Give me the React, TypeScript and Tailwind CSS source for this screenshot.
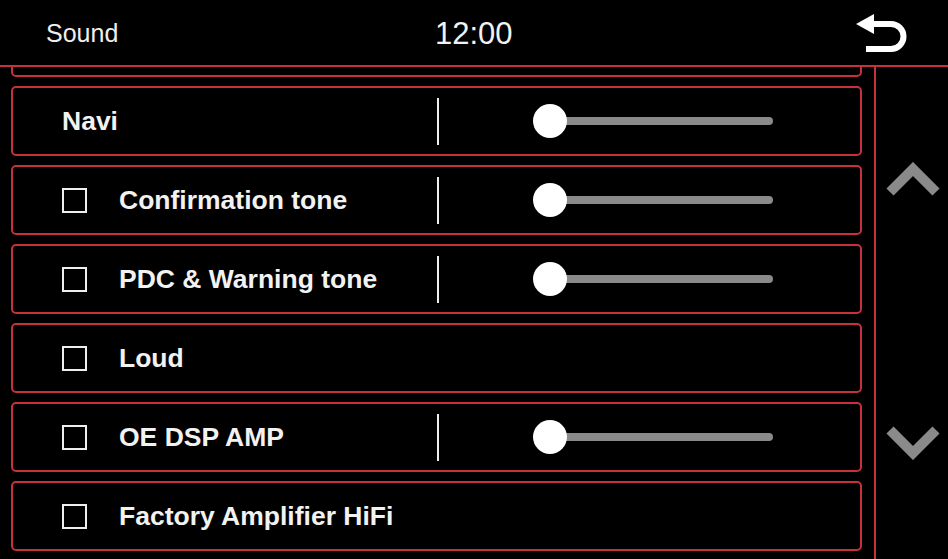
import React from 'react';

type Row = {
  label: string;
  checkbox: boolean;
  slider: boolean;
};

const rows: Row[] = [
  { label: 'Navi', checkbox: false, slider: true },
  { label: 'Confirmation tone', checkbox: true, slider: true },
  { label: 'PDC & Warning tone', checkbox: true, slider: true },
  { label: 'Loud', checkbox: true, slider: false },
  { label: 'OE DSP AMP', checkbox: true, slider: true },
  { label: 'Factory Amplifier HiFi', checkbox: true, slider: false },
];

function BackIcon() {
  return (
    <svg width="53" height="40" viewBox="0 0 53 40" fill="none">
      <path d="M1 11 L19 1 L19 21 Z" fill="#fff" />
      <path d="M17 11 H36 A12.5 12.5 0 0 1 36 36 H11" stroke="#fff" strokeWidth="6" />
    </svg>
  );
}

function Chevron({ up }: { up: boolean }) {
  return (
    <svg width="54" height="34" viewBox="0 0 54 34" fill="none">
      <polyline
        points={up ? '4,30 27,7 50,30' : '4,4 27,27 50,4'}
        stroke="#8a8a8a"
        strokeWidth="10"
        strokeLinejoin="miter"
      />
    </svg>
  );
}

function Slider() {
  return (
    <div className="relative flex h-[34px] w-[240px] items-center">
      <div className="ml-[17px] h-[8px] w-[223px] rounded-full bg-[#8a8a8a]" />
      <div className="absolute left-0 top-0 size-[34px] rounded-full bg-white" />
    </div>
  );
}

function SoundRow({ row }: { row: Row }) {
  return (
    <div className="flex h-[70px] shrink-0 items-center rounded-[5px] border-2 border-[#c7313b]">
      <div className="flex w-[424px] items-center pl-[49px]">
        {row.checkbox && (
          <div className="mr-[32px] size-[25px] border-2 border-[#eeeeee]" />
        )}
        <span className="pt-[2px] text-[26.5px] font-bold text-[#f2f2f2]">{row.label}</span>
      </div>
      {row.slider && (
        <>
          <div className="h-[47px] w-[2px] bg-[#eeeeee]" />
          <div className="pl-[94px]">
            <Slider />
          </div>
        </>
      )}
    </div>
  );
}

export default function App() {
  return (
    <div
      className="flex h-[559px] w-[948px] flex-col overflow-hidden bg-black"
      style={{ fontFamily: '"Liberation Sans", Arial, sans-serif' }}
    >
      <header className="flex h-[67px] shrink-0 items-center border-b-2 border-[#c7313b]">
        <div className="mt-[2px] w-[435px] pl-[46px] text-[25px] text-[#eeeeee]">Sound</div>
        <div className="mt-[3px] text-[31px] text-[#f2f2f2]">12:00</div>
        <div className="ml-auto mr-[40px] mt-[1px]">
          <BackIcon />
        </div>
      </header>
      <div className="flex min-h-0 flex-1">
        <div className="flex w-[874px] flex-col gap-[9px] overflow-hidden pl-[11px] pr-[12px]">
          <div className="-mt-[60px] h-[70px] shrink-0 rounded-[5px] border-2 border-[#c7313b]" />
          {rows.map((row) => (
            <SoundRow key={row.label} row={row} />
          ))}
        </div>
        <div className="w-[2px] bg-[#c7313b]" />
        <div className="flex flex-1 flex-col items-center gap-[230px] pt-[95px] pl-[2px]">
          <Chevron up />
          <Chevron up={false} />
        </div>
      </div>
    </div>
  );
}
